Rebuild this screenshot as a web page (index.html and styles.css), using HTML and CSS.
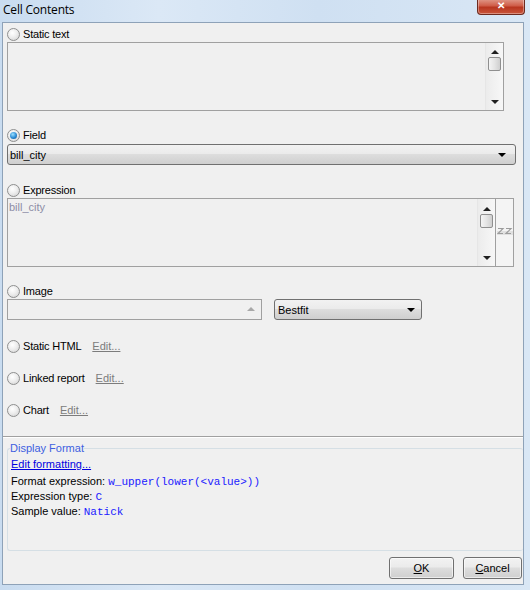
FILE: index.html
```html
<!DOCTYPE html>
<html lang="en">
<head>
    <meta charset="UTF-8">
    <title>Cell Contents</title>
    <link rel="stylesheet" href="styles.css">
</head>
<body>
<div class="window">
    <div class="titlebar">
        <span class="title">Cell Contents</span>
        <span class="close">&#x2715;</span>
    </div>
    <div class="client">
        <!-- static text -->
        <div class="option first"><span class="radio"></span>Static text</div>
        <div class="memo static">
            <div class="memo-body"></div>
            <div class="vscroll">
                <span class="arrow up"></span>
                <span class="thumb"></span>
                <span class="arrow down"></span>
            </div>
        </div>

        <!-- field -->
        <div class="option gap16"><span class="radio checked"></span>Field</div>
        <div class="combo wide"><span>bill_city</span><span class="caret"></span></div>

        <!-- expression -->
        <div class="option gap17"><span class="radio"></span>Expression</div>
        <div class="memo expr">
            <div class="memo-body">bill_city</div>
            <div class="vscroll">
                <span class="arrow up"></span>
                <span class="thumb"></span>
                <span class="arrow down"></span>
            </div>
            <div class="side">
                <!-- disabled builder icon -->
                <svg width="16" height="8" viewBox="0 0 16 8">
                    <rect x="0" y="4" width="16" height="4" fill="#e0e0e0"/>
                    <path d="M1 1.5h5l-5 5h5M9 1.5h5l-5 5h5" fill="none" stroke="#9c9c9c" stroke-width="1.2"/>
                    <path d="M3 4l1-1M11 4l1-1" stroke="#b8b8b8" stroke-width="1"/>
                </svg>
            </div>
        </div>

        <!-- image -->
        <div class="option gap16"><span class="radio"></span>Image</div>
        <div class="image-row">
            <div class="path"><span class="arrow up dim"></span></div>
            <div class="combo fit"><span>Bestfit</span><span class="caret"></span></div>
        </div>

        <div class="option gap18"><span class="radio"></span>Static HTML<a class="edit">Edit...</a></div>
        <div class="option gap16"><span class="radio"></span>Linked report<a class="edit">Edit...</a></div>
        <div class="option gap16"><span class="radio"></span>Chart<a class="edit">Edit...</a></div>

        <div class="separator"></div>

        <fieldset class="format">
            <legend>Display Format</legend>
            <a class="link">Edit formatting...</a>
            <div class="line first">Format expression: <code>w_upper(lower(&lt;value&gt;))</code></div>
            <div class="line">Expression type: <code>C</code></div>
            <div class="line">Sample value: <code>Natick</code></div>
        </fieldset>

        <div class="buttons">
            <button type="button" class="button ok"><u>O</u>K</button>
            <button type="button" class="button cancel"><u>C</u>ancel</button>
        </div>
    </div>
</div>
</body>
</html>
```

FILE: styles.css
```css
html, body {
    margin: 0;
    padding: 0;
}
body {
    width: 530px;
    height: 590px;
    overflow: hidden;
    background: linear-gradient(90deg, #c9dcf0 0%, #dbe8f6 30%, #cfe0f2 60%, #d9e7f5 100%);
    font-family: "Liberation Sans", Arial, sans-serif;
    font-size: 11px;
    color: #000;
}
.window {
    display: flex;
    flex-direction: column;
    height: 590px;
}
.titlebar {
    height: 22px;
    display: flex;
    align-items: flex-start;
    justify-content: space-between;
    padding: 0 5px 0 3px;
}
.title {
    font-family: "Open Sans", "Noto Sans", sans-serif;
    font-size: 12px;
    line-height: 19px;
    letter-spacing: -0.2px;
}
.close {
    width: 46px;
    height: 15px;
    margin-top: -1px;
    border: 1px solid #6d2a1f;
    border-top: none;
    border-radius: 0 0 4px 4px;
    background: linear-gradient(#e09a8a 0%, #cf5d48 45%, #b8361f 55%, #c9563c 100%);
    color: #fff;
    font-size: 10px;
    font-weight: bold;
    line-height: 14px;
    text-align: center;
    box-shadow: inset 0 0 0 1px rgba(255,255,255,.35);
}
.client {
    margin: 0 6px 0 2px;
    height: 563px;
    background: #f0f0f0;
    border: 1px solid #8ea2b8;
    box-sizing: border-box;
    padding: 0 0 0 4px;
    display: flex;
    flex-direction: column;
}

/* radio rows */
.option {
    height: 16px;
    line-height: 16px;
    display: flex;
    align-items: center;
    white-space: pre;
    letter-spacing: -0.2px;
}
.option.first { margin-top: 3px; }
.gap16 { margin-top: 16px; }
.gap17 { margin-top: 17px; }
.gap18 { margin-top: 18px; }
.radio {
    width: 11px;
    height: 11px;
    border: 1px solid #8e8f8f;
    border-radius: 50%;
    background: radial-gradient(circle at 40% 35%, #ffffff 0%, #eeeeee 45%, #cfcfcf 100%);
    margin-right: 3px;
    flex: none;
    position: relative;
}
.radio.checked::after {
    content: "";
    position: absolute;
    left: 2px;
    top: 2px;
    width: 7px;
    height: 7px;
    border-radius: 50%;
    background: radial-gradient(circle at 40% 35%, #9be0ff 0%, #2a8ad4 55%, #0d4f8c 100%);
}
.edit {
    color: #7c7c7c;
    text-decoration: underline;
    margin-left: 11px;
    letter-spacing: 0;
}

/* memo boxes with scrollbars */
.memo {
    display: flex;
    height: 69px;
    border: 1px solid #a0a0a0;
    box-sizing: border-box;
    background: #f0f0f0;
}
.memo.static { width: 497px; }
.memo.expr { width: 507px; }
.memo-body {
    flex: 1;
    padding: 2px 1px;
    color: #8d8da6;
    line-height: 12px;
}
.vscroll {
    width: 17px;
    display: flex;
    flex-direction: column;
    align-items: center;
    background: linear-gradient(90deg, #ececec, #f7f7f7);
    border-left: 1px solid #e6e6e6;
}
.vscroll .thumb {
    width: 13px;
    height: 14px;
    margin-top: 3px;
    border: 1px solid #8f8f8f;
    border-radius: 2px;
    box-sizing: border-box;
    background: linear-gradient(90deg, #f4f4f4 0%, #e4e4e4 50%, #cfcfcf 100%);
}
.arrow {
    width: 0;
    height: 0;
    border-left: 4px solid transparent;
    border-right: 4px solid transparent;
}
.arrow.up {
    border-bottom: 4px solid #202020;
    margin-top: 7px;
}
.arrow.down {
    border-top: 4px solid #202020;
    margin-top: auto;
    margin-bottom: 6px;
}
.memo.expr .arrow.up { margin-top: 8px; }
.side {
    width: 18px;
    border-left: 1px solid #a0a0a0;
    background: #f4f4f4;
    display: flex;
    justify-content: center;
    padding-top: 28px;
    box-sizing: border-box;
}
.side svg {
    display: block;
}

/* dropdowns */
.combo {
    height: 21px;
    border: 1px solid #707070;
    border-radius: 3px;
    box-sizing: border-box;
    background: linear-gradient(#f2f2f2 0%, #ebebeb 45%, #dddddd 50%, #cfcfcf 100%);
    display: flex;
    align-items: center;
    justify-content: space-between;
    padding: 0 9px 0 2px;
    color: #000;
}
.combo.wide {
    width: 509px;
    margin-top: 1px;
}
.caret {
    width: 0;
    height: 0;
    border-left: 4px solid transparent;
    border-right: 4px solid transparent;
    border-top: 4px solid #000;
}
.image-row {
    display: flex;
    align-items: flex-start;
    gap: 12px;
}
.path {
    width: 255px;
    height: 21px;
    border: 1px solid #a0a0a0;
    box-sizing: border-box;
    display: flex;
    justify-content: flex-end;
    padding-right: 6px;
}
.path .arrow.dim {
    border-bottom-color: #a8a8a8;
    margin-top: 7px;
}
.combo.fit {
    width: 148px;
    padding: 0 6px 0 3px;
}

.separator {
    margin: 18px 0 0 -4px;
    border-top: 1px solid #a0a0a0;
    border-bottom: 1px solid #ffffff;
}

/* display format group */
.format {
    margin: 4px 0 0 0;
    width: 516px;
    height: 109px;
    box-sizing: border-box;
    border: 1px solid #d5dfe5;
    border-radius: 3px;
    border-right: none;
    padding: 0 0 0 3px;
}
.format legend {
    color: #3d5fe0;
    padding: 0;
    margin-left: -1px;
    line-height: 13px;
}
.link {
    display: block;
    color: #0000e0;
    text-decoration: underline;
    line-height: 14px;
    margin-top: 2px;
}
.line {
    line-height: 14px;
}
.line.first {
    margin-top: 3px;
}
code {
    font-family: "Liberation Mono", "Courier New", monospace;
    font-size: 11px;
    color: #2020ff;
}

/* dialog buttons */
.buttons {
    display: flex;
    justify-content: flex-end;
    gap: 9px;
    margin-top: 6px;
    padding-right: 1px;
}
.button {
    height: 22px;
    border: 1px solid #707070;
    border-radius: 3px;
    background: linear-gradient(#f2f2f2 0%, #ebebeb 45%, #dddddd 50%, #cfcfcf 100%);
    font-family: "Liberation Sans", Arial, sans-serif;
    font-size: 11px;
    color: #000;
    padding: 0;
    box-shadow: inset 0 0 0 1px rgba(255,255,255,.6);
}
.button.ok { width: 65px; }
.button.cancel { width: 59px; }
```
